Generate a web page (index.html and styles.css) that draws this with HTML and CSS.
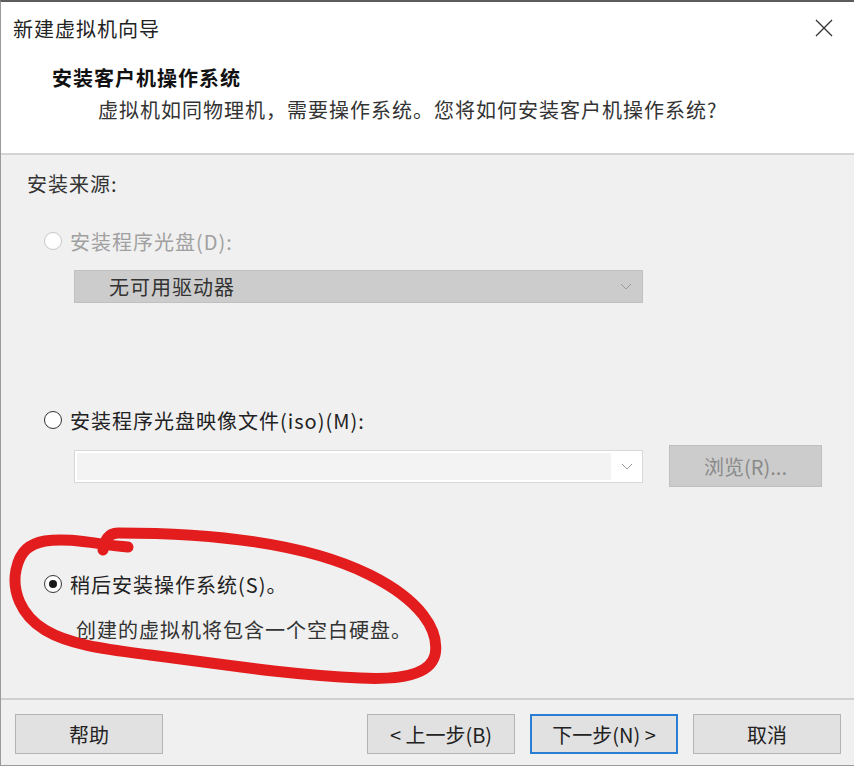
FILE: index.html
```html
<!DOCTYPE html>
<html lang="zh-CN">
<head>
  <meta charset="UTF-8">
  <title>新建虚拟机向导</title>
  <link rel="stylesheet" href="styles.css">
</head>
<body>
  <div class="dialog">
    <!-- Header -->
    <div class="header">
      <div class="titlebar">
        <span class="title">新建虚拟机向导</span>
        <svg class="close" width="18" height="18" viewBox="0 0 18 18">
          <path d="M1 1 L17 17 M17 1 L1 17" stroke="#333" stroke-width="1.3" fill="none"/>
        </svg>
      </div>
      <div class="heading">安装客户机操作系统</div>
      <div class="subheading">虚拟机如同物理机，需要操作系统。您将如何安装客户机操作系统?</div>
    </div>

    <!-- Body -->
    <div class="body">
      <div class="section-label">安装来源:</div>

      <label class="option disabled first">
        <span class="radio"></span>
        <span>安装程序光盘(D):</span>
      </label>
      <div class="select disabled">
        <span>无可用驱动器</span>
        <svg class="chevron" width="12" height="7" viewBox="0 0 12 7"><path d="M1 1 L6 6 L11 1" stroke="#9a9a9a" stroke-width="1" fill="none"/></svg>
      </div>

      <label class="option second">
        <span class="radio"></span>
        <span>安装程序光盘映像文件(iso)(M):</span>
      </label>
      <div class="iso-row">
        <div class="combo">
          <div class="combo-field"></div>
          <div class="combo-arrow">
            <svg width="12" height="7" viewBox="0 0 12 7"><path d="M1 1 L6 6 L11 1" stroke="#9a9a9a" stroke-width="1" fill="none"/></svg>
          </div>
        </div>
        <div class="browse">浏览(R)...</div>
      </div>

      <label class="option third">
        <span class="radio checked"></span>
        <span>稍后安装操作系统(S)。</span>
      </label>
      <div class="note">创建的虚拟机将包含一个空白硬盘。</div>
    </div>

    <!-- Footer -->
    <div class="footer">
      <button class="btn">帮助</button>
      <div class="spacer"></div>
      <button class="btn">&lt; 上一步(B)</button>
      <button class="btn primary">下一步(N) &gt;</button>
      <button class="btn">取消</button>
    </div>

    <!-- hand-drawn marker over the third option -->
    <svg class="marker" width="854" height="766" viewBox="0 0 854 766">
      <path d="M103 550 C105 540 108 533 118 533 C200 533 300 540 370 575 C420 600 440 630 435 655 C430 675 400 680 360 678 C290 675 220 664 150 655 C105 649 70 645 45 630 C20 615 12 590 16 570 C20 550 30 544 45 541 C70 537 100 545 128 547"
            stroke="#e31d1d" stroke-width="11" fill="none" stroke-linecap="round" stroke-linejoin="round"/>
    </svg>
  </div>
</body>
</html>
```

FILE: styles.css
```css
html, body {
  margin: 0;
  padding: 0;
}

body {
  font-family: "Noto Sans CJK SC", "Noto Sans", sans-serif;
  font-size: 20px;
  color: #222;
  background: #f0f0f0;
}

.dialog {
  position: relative;
  width: 854px;
  height: 766px;
  box-sizing: border-box;
  border-top: 2px solid #5c5c5c;
  border-left: 1px solid #9a9a9a;
  border-bottom: 1px solid #9a9a9a;
  display: flex;
  flex-direction: column;
  overflow: hidden;
}

.header {
  background: #fff;
  height: 151px;
  border-bottom: 2px solid #d4d4d4;
  flex: none;
}

.titlebar {
  height: 52px;
  display: flex;
  align-items: center;
  justify-content: space-between;
  padding: 0 21px 0 12px;
}

.title {
  letter-spacing: 1px;
}

.heading {
  margin-top: 9px;
  padding-left: 51px;
  line-height: 30px;
  font-weight: bold;
  letter-spacing: 1px;
  color: #111;
}

.subheading {
  margin-top: 2px;
  padding-left: 97px;
  line-height: 30px;
  letter-spacing: 1px;
  color: #333;
}

.body {
  flex: 1;
  padding-left: 26px;
}

.section-label {
  margin-top: 14px;
  line-height: 30px;
  letter-spacing: 1px;
  color: #333;
}

.option {
  display: flex;
  align-items: center;
  height: 30px;
  margin-left: 17px;
  letter-spacing: 1px;
  color: #222;
}

.option.first { margin-top: 27px; }
.option.second { margin-top: 102px; }
.option.third { margin-top: 82px; }

.option.disabled { color: #a0a0a0; }

.radio {
  width: 16px;
  height: 16px;
  border: 1px solid #333;
  border-radius: 50%;
  background: #fff;
  margin-right: 8px;
  display: flex;
  align-items: center;
  justify-content: center;
  flex: none;
}

.option.disabled .radio { border-color: #c8c8c8; }

.radio.checked::after {
  content: "";
  width: 8px;
  height: 8px;
  border-radius: 50%;
  background: #1a1a1a;
}

.select {
  margin: 14px 0 0 47px;
  width: 569px;
  height: 33px;
  box-sizing: border-box;
  background: #cccccc;
  border: 1px solid #c0c0c0;
  display: flex;
  align-items: center;
  justify-content: space-between;
  padding: 0 10px 0 34px;
  letter-spacing: 1px;
  color: #333;
}

.iso-row {
  display: flex;
  align-items: center;
  margin: 10px 0 0 47px;
  gap: 26px;
}

.combo {
  width: 569px;
  height: 33px;
  box-sizing: border-box;
  border: 1px solid #d8d8d8;
  background: #fff;
  display: flex;
}

.combo-field {
  flex: 1;
  margin: 2px 0 2px 2px;
  background: #f3f3f3;
}

.combo-arrow {
  width: 31px;
  display: flex;
  align-items: center;
  justify-content: center;
}

.browse {
  width: 153px;
  height: 42px;
  box-sizing: border-box;
  background: #cccccc;
  border: 1px solid #bfbfbf;
  color: #8a8a8a;
  display: flex;
  align-items: center;
  justify-content: center;
}

.note {
  margin: 16px 0 0 49px;
  line-height: 30px;
  letter-spacing: 1px;
  color: #333;
}

.footer {
  flex: none;
  height: 67px;
  border-top: 2px solid #d0d0d0;
  display: flex;
  align-items: flex-start;
  gap: 15px;
  padding: 14px 13px 0 14px;
  box-sizing: border-box;
}

.spacer {
  flex: 1;
}

.btn {
  width: 148px;
  height: 40px;
  box-sizing: border-box;
  background: #e1e1e1;
  border: 1px solid #b4b4b4;
  font-family: inherit;
  font-size: 20px;
  color: #222;
  padding: 0;
}

.btn.primary {
  border: 2px solid #2a7fd4;
}

.marker {
  position: absolute;
  left: -1px;
  top: -2px;
  pointer-events: none;
}
```
